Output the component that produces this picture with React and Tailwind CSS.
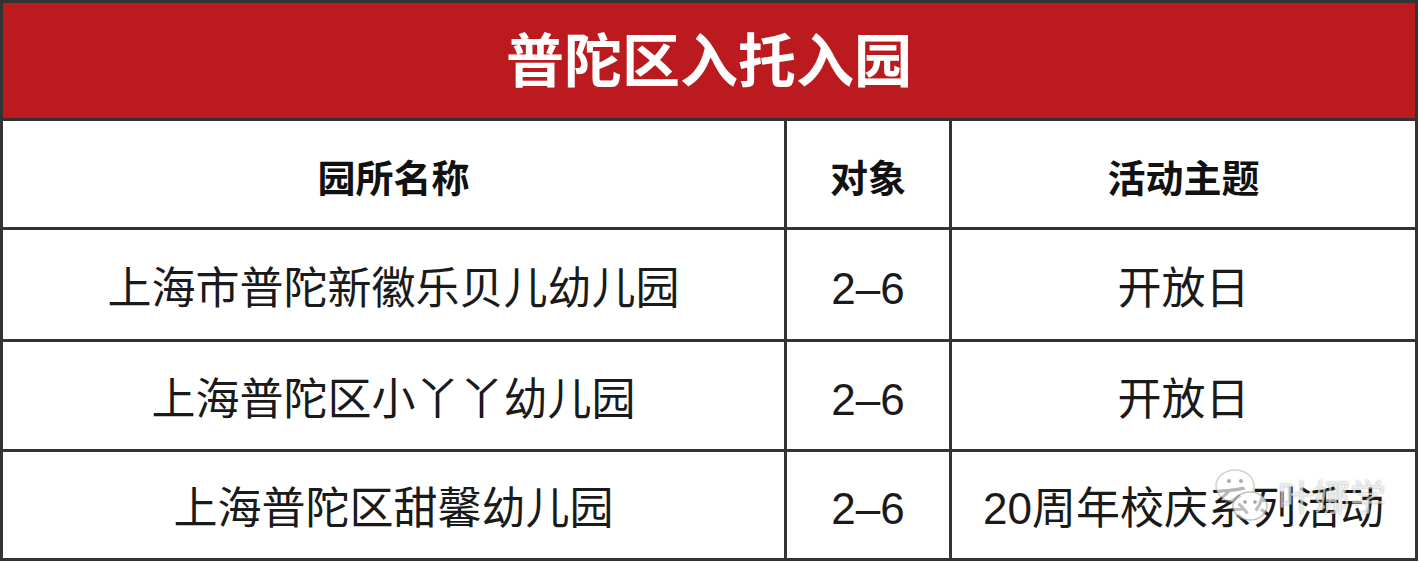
import React from "react";

const rows = [
  ["上海市普陀新徽乐贝儿幼儿园", "2–6", "开放日"],
  ["上海普陀区小丫丫幼儿园", "2–6", "开放日"],
  ["上海普陀区甜馨幼儿园", "2–6", "20周年校庆系列活动"],
];

const font = { fontFamily: '"Liberation Sans", "Noto Sans CJK SC", sans-serif' };

export default function App() {
  return (
    <div className="w-[1420px] h-[563px] bg-white">
      <div className="relative w-[1418px] bg-[#333333] p-[3px]" style={font}>
        <div className="h-[115px] bg-[#bb1a1f] flex items-center justify-center">
          <span className="text-white font-bold text-[58px] leading-none tracking-[0px] pt-[2px]">普陀区入托入园</span>
        </div>
        <div className="mt-[3px] grid grid-cols-[781px_162px_463px] grid-rows-[106px_109px_107px_106px] gap-[3px]">
          {["园所名称", "对象", "活动主题"].map((h) => (
            <div key={h} className="bg-white flex items-center justify-center pt-[10px]">
              <span className="font-bold text-[38px] leading-none text-[#111]">{h}</span>
            </div>
          ))}
          {rows.map((r, i) =>
            r.map((c, j) => (
              <div key={i + "-" + j} className="bg-white flex items-center justify-center pt-[8px]">
                <span className="text-[44px] leading-none text-[#1a1a1a] whitespace-nowrap">{c}</span>
              </div>
            ))
          )}
        </div>
        <div className="absolute left-[1212px] top-[462px] flex items-center gap-[6px] opacity-80 pointer-events-none">
          <svg width="60" height="66" viewBox="0 0 60 66">
            <ellipse cx="23" cy="24" rx="19" ry="16" fill="rgba(255,255,255,0.85)" stroke="rgba(160,160,160,0.6)" strokeWidth="1.5" />
            <circle cx="17" cy="19" r="2" fill="#999" />
            <circle cx="29" cy="19" r="2" fill="#999" />
            <ellipse cx="38" cy="44" rx="17" ry="14" fill="rgba(255,255,255,0.9)" stroke="rgba(150,150,150,0.7)" strokeWidth="1.5" />
            <circle cx="33" cy="40" r="1.8" fill="#888" />
            <circle cx="43" cy="40" r="1.8" fill="#888" />
          </svg>
          <span
            className="text-[36px] leading-none text-[rgba(255,255,255,0.75)] [text-shadow:0_0_2px_rgba(0,0,0,0.45)]"
            style={{ fontFamily: '"Noto Sans CJK SC", sans-serif' }}
          >
            叶娜学
          </span>
        </div>
      </div>
    </div>
  );
}
